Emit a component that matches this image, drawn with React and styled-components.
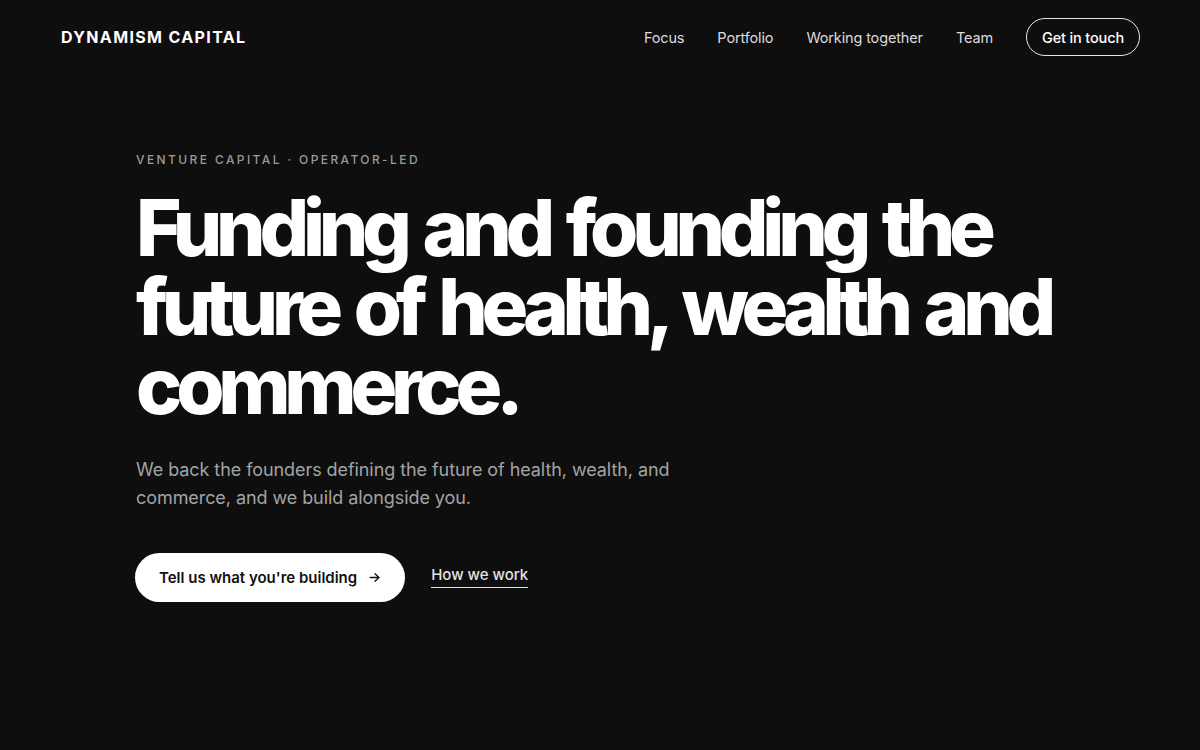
import React from "react";
import styled, { createGlobalStyle } from "styled-components";

const GlobalStyle = createGlobalStyle`
  html, body {
    margin: 0;
    padding: 0;
    background: #0e0e0f;
  }
  body {
    font-family: Inter, "Noto Sans", sans-serif;
    color: #fff;
    -webkit-font-smoothing: antialiased;
  }
  * { box-sizing: border-box; }
`;

const Page = styled.div`
  min-height: 750px;
  background: #0e0e0f;
`;

const Nav = styled.header`
  display: flex;
  align-items: center;
  justify-content: space-between;
  height: 74px;
  padding: 0 60px 0 61px;
`;

const Logo = styled.a`
  font-size: 16px;
  font-weight: 700;
  letter-spacing: 0.085em;
  color: #fff;
  text-decoration: none;
`;

const Links = styled.nav`
  display: flex;
  align-items: center;
  gap: 33px;
`;

const NavLink = styled.a`
  font-size: 14.5px;
  letter-spacing: -0.01em;
  color: #dcdcdc;
  text-decoration: none;
`;

const Pill = styled.a`
  display: inline-flex;
  align-items: center;
  height: 38px;
  padding: 0 15px;
  border: 1px solid #e6e6e6;
  border-radius: 19px;
  font-size: 14.5px;
  letter-spacing: -0.01em;
  font-weight: 500;
  color: #fff;
  text-decoration: none;
`;

const Hero = styled.main`
  padding: 78px 136px 0;
`;

const Eyebrow = styled.p`
  margin: 0;
  font-size: 12px;
  font-weight: 500;
  letter-spacing: 0.2em;
  color: #9a9a9a;
  text-transform: uppercase;
`;

const Title = styled.h1`
  margin: 21px 0 0;
  font-size: 78px;
  line-height: 79px;
  font-weight: 800;
  letter-spacing: -0.08em;
  word-spacing: 6px;
  color: #fff;
  max-width: 930px;
`;

const Lead = styled.p`
  margin: 31px 0 0;
  max-width: 560px;
  font-size: 18px;
  line-height: 28px;
  letter-spacing: -0.004em;
  color: #a3a3a3;
`;

const Actions = styled.div`
  display: flex;
  align-items: center;
  gap: 26px;
  margin-top: 41px;
`;

const Primary = styled.a`
  display: inline-flex;
  align-items: center;
  gap: 11px;
  height: 49px;
  padding: 0 24px;
  margin-left: -1px;
  border-radius: 25px;
  background: #fff;
  color: #111;
  font-size: 15px;
  font-weight: 600;
  text-decoration: none;
`;

const TextLink = styled.a`
  font-size: 15px;
  font-weight: 500;
  color: #e2e2e2;
  text-decoration: none;
  padding-bottom: 3px;
  border-bottom: 1px solid #e2e2e2;
  margin-top: -2px;
`;

const Arrow = () => (
  <svg width="13" height="13" viewBox="0 0 24 24" fill="none" stroke="currentColor" strokeWidth="2.4" strokeLinecap="round" strokeLinejoin="round">
    <path d="M4 12h16" />
    <path d="M13 5l7 7-7 7" />
  </svg>
);

export default function App() {
  return (
    <Page>
      <GlobalStyle />
      <Nav>
        <Logo href="#">DYNAMISM CAPITAL</Logo>
        <Links>
          <NavLink href="#">Focus</NavLink>
          <NavLink href="#">Portfolio</NavLink>
          <NavLink href="#">Working together</NavLink>
          <NavLink href="#">Team</NavLink>
          <Pill href="#">Get in touch</Pill>
        </Links>
      </Nav>
      <Hero>
        <Eyebrow>Venture capital · Operator-led</Eyebrow>
        <Title>Funding and founding the future of health, wealth and commerce.</Title>
        <Lead>
          We back the founders defining the future of health, wealth, and commerce, and we build alongside you.
        </Lead>
        <Actions>
          <Primary href="#">
            Tell us what you're building <Arrow />
          </Primary>
          <TextLink href="#">How we work</TextLink>
        </Actions>
      </Hero>
    </Page>
  );
}
